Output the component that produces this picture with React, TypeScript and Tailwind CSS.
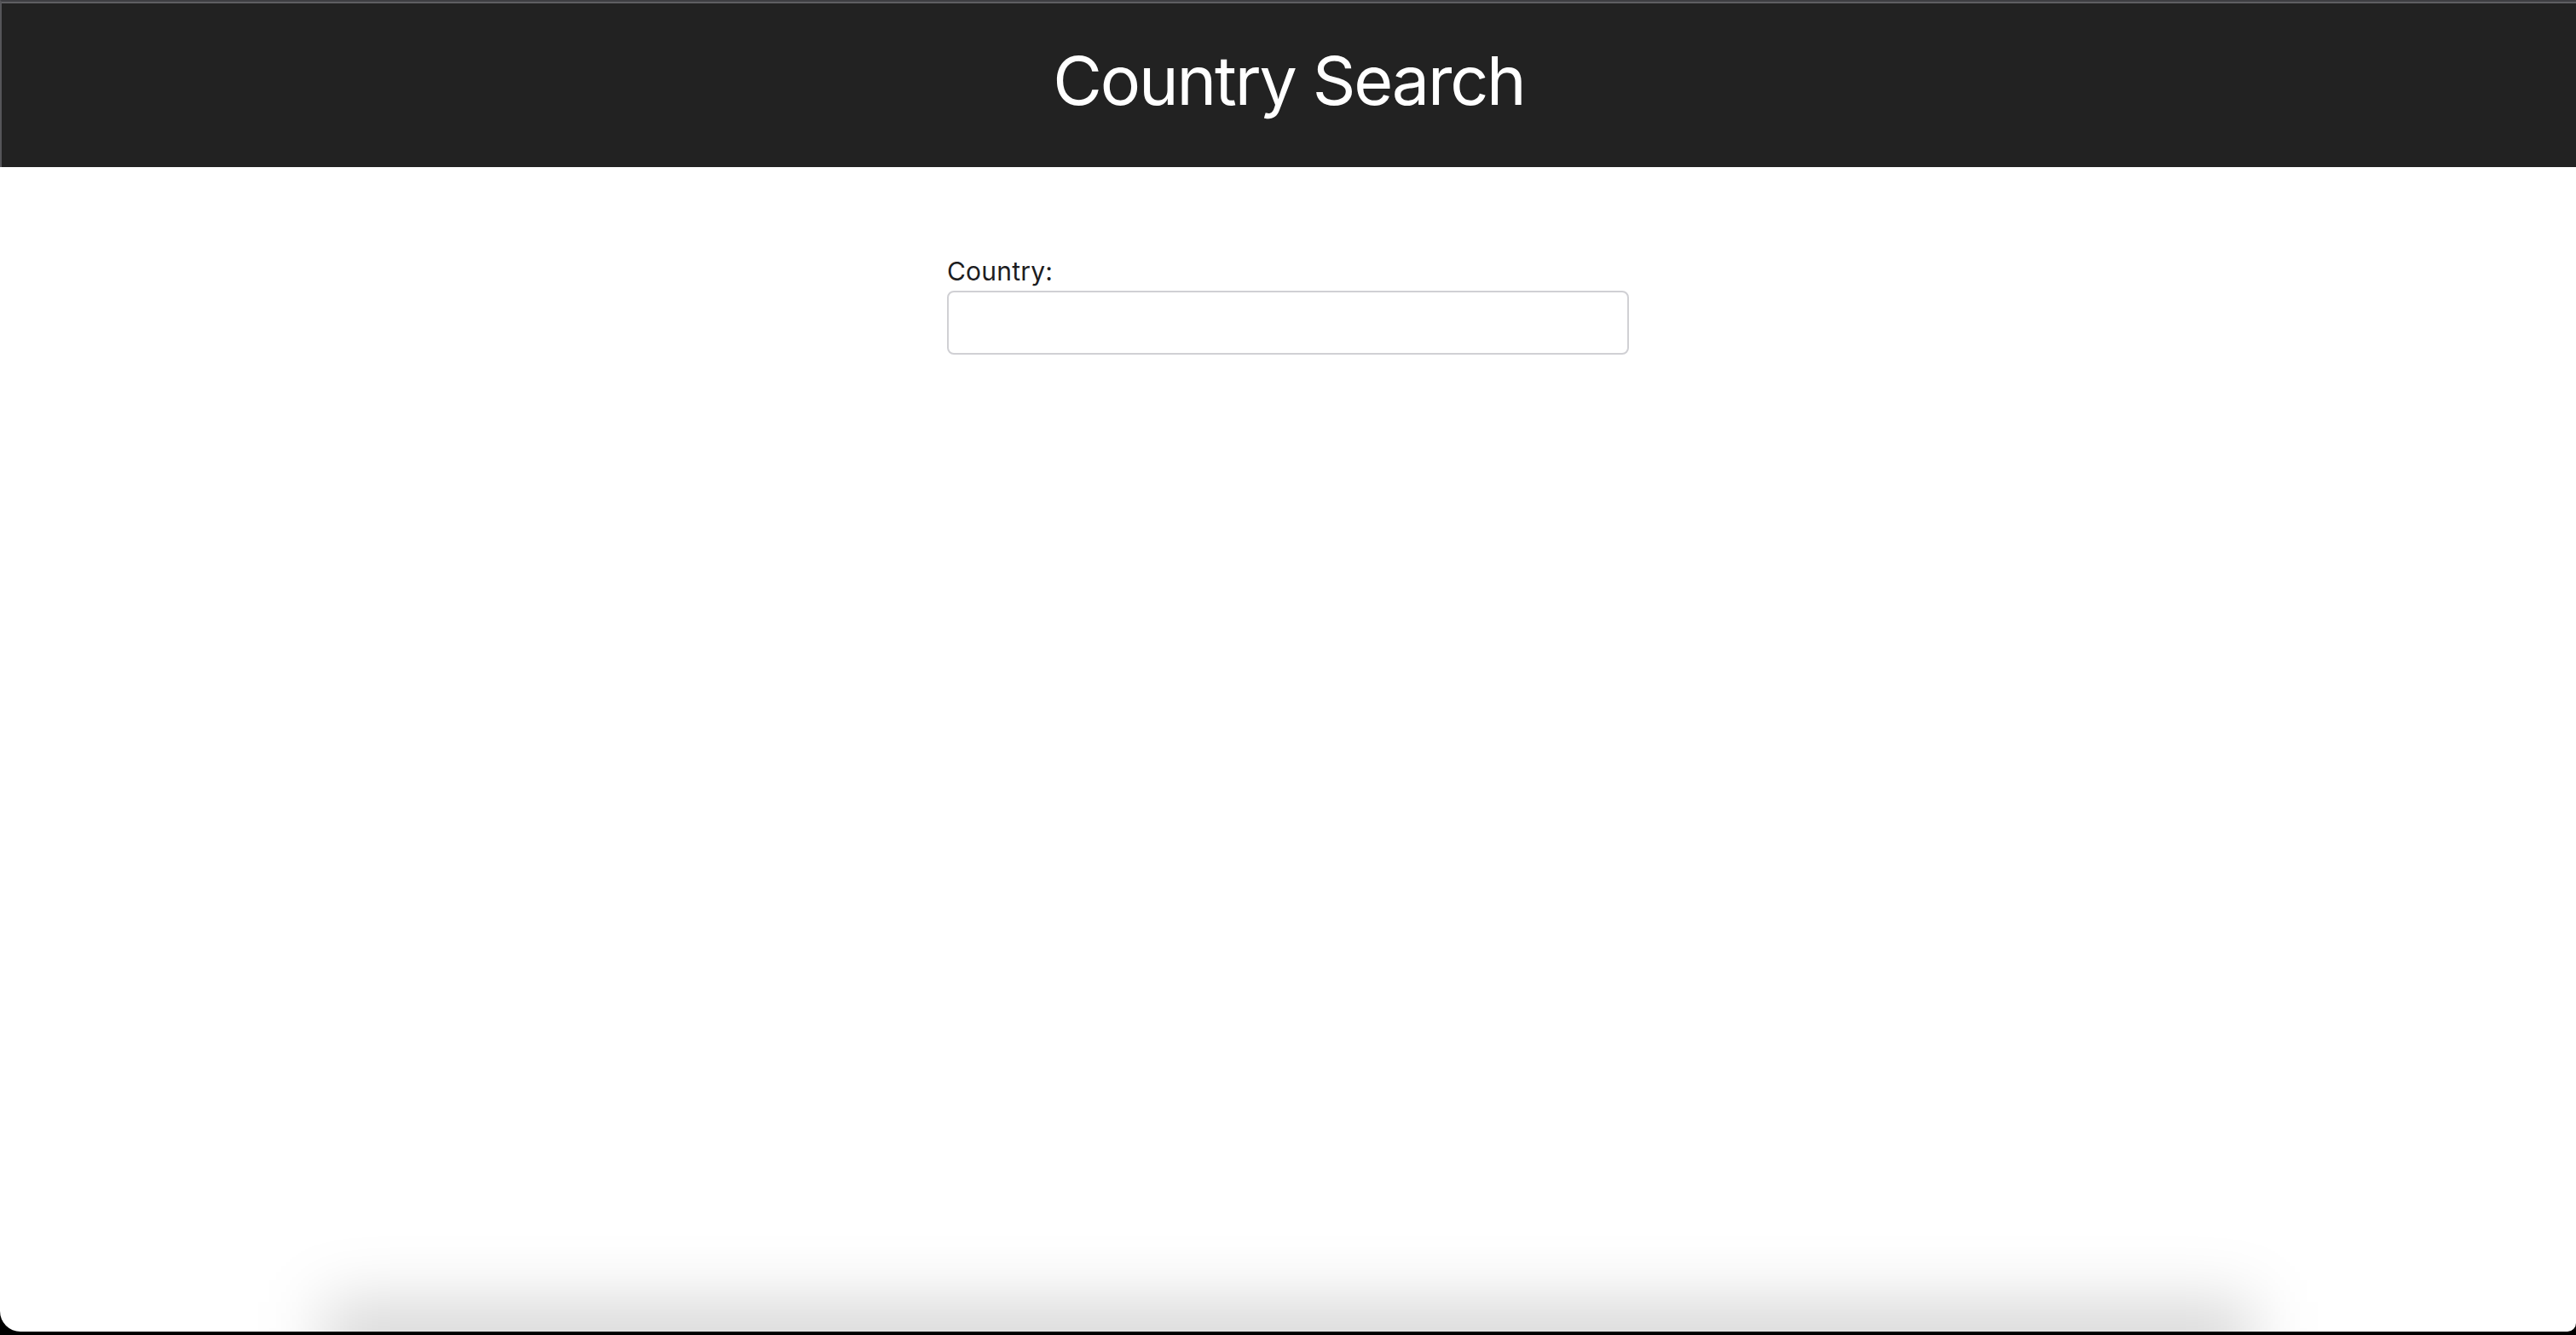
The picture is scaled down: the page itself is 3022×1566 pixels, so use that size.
import React from "react";

export default function App() {
  return (
    <div className="h-[1566px] w-full bg-black overflow-hidden" style={{ fontFamily: "Inter, 'Noto Sans', sans-serif" }}>
      <div className="relative h-[1562px] w-full bg-white rounded-bl-[24px] rounded-br-[10px] overflow-hidden">
        <header className="h-[196px] bg-[#222222] border-t-2 border-l-2 border-t-[#3e3e42] border-l-[#555559] shadow-[inset_0_2px_0_#5e5e62] flex items-center justify-center pb-[10px]">
          <h1 className="text-white text-[79px] font-normal tracking-[-2.2px] leading-none">Country Search</h1>
        </header>
        <main className="flex justify-center pt-[104px]">
          <div className="w-[800px] flex flex-col">
            <label htmlFor="country" className="text-[30px] leading-[36px] text-[#1d1d1f] mb-[5px] tracking-[0.2px]">Country:</label>
            <input id="country" type="text" className="h-[75px] w-full rounded-[8px] border-2 border-[#d0d0d4] bg-white outline-none px-4 text-[30px]" />
          </div>
        </main>
        <div className="pointer-events-none absolute left-[380px] right-[380px] bottom-[-55px] h-[90px] bg-black/[0.16] blur-[38px]" />
      </div>
    </div>
  );
}
